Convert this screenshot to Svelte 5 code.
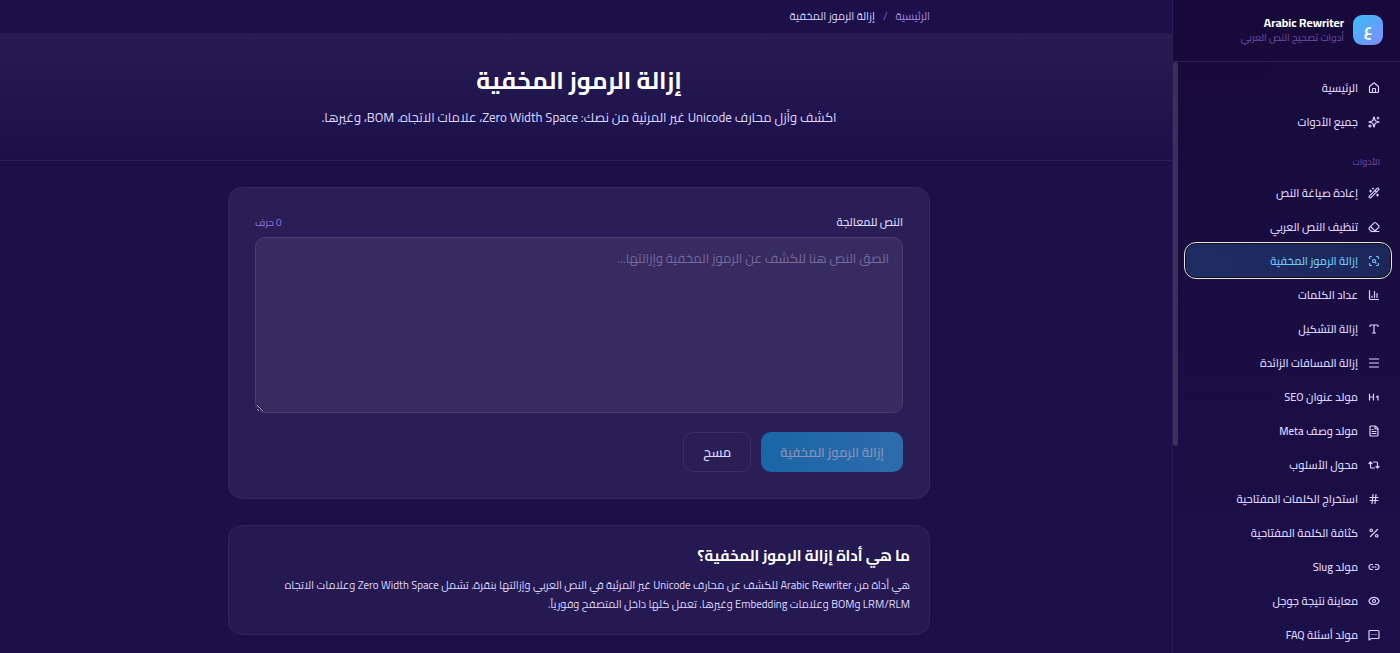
<script>
	let text = $state('');

	const mainLinks = [
		{ icon: 'home', label: 'الرئيسية' },
		{ icon: 'sparkles', label: 'جميع الأدوات' }
	];

	const tools = [
		{ icon: 'wand', label: 'إعادة صياغة النص' },
		{ icon: 'eraser', label: 'تنظيف النص العربي' },
		{ icon: 'scan', label: 'إزالة الرموز المخفية', active: true },
		{ icon: 'chart', label: 'عداد الكلمات' },
		{ icon: 'type', label: 'إزالة التشكيل' },
		{ icon: 'lines', label: 'إزالة المسافات الزائدة' },
		{ icon: 'heading', label: 'مولد عنوان SEO' },
		{ icon: 'file', label: 'مولد وصف Meta' },
		{ icon: 'repeat', label: 'محول الأسلوب' },
		{ icon: 'hash', label: 'استخراج الكلمات المفتاحية' },
		{ icon: 'percent', label: 'كثافة الكلمة المفتاحية' },
		{ icon: 'link', label: 'مولد Slug' },
		{ icon: 'eye', label: 'معاينة نتيجة جوجل' },
		{ icon: 'message', label: 'مولد أسئلة FAQ' }
	];

	const icons = {
		home: 'M15 21v-7a1 1 0 0 0-1-1h-4a1 1 0 0 0-1 1v7M3 10a2 2 0 0 1 .7-1.5l7-6a2 2 0 0 1 2.6 0l7 6A2 2 0 0 1 21 10v9a2 2 0 0 1-2 2H5a2 2 0 0 1-2-2z',
		sparkles: 'M9.94 15.5A2 2 0 0 0 8.5 14.06l-6.14-1.58a.5.5 0 0 1 0-.96L8.5 9.94A2 2 0 0 0 9.94 8.5l1.58-6.14a.5.5 0 0 1 .96 0L14.06 8.5A2 2 0 0 0 15.5 9.94l6.14 1.58a.5.5 0 0 1 0 .96L15.5 14.06a2 2 0 0 0-1.44 1.44l-1.58 6.14a.5.5 0 0 1-.96 0zM20 2v4M22 4h-4M4 18a2 2 0 1 0 0 4 2 2 0 0 0 0-4z',
		wand: 'm21.64 3.64-1.28-1.28a1.2 1.2 0 0 0-1.72 0L2.36 18.64a1.2 1.2 0 0 0 0 1.72l1.28 1.28a1.2 1.2 0 0 0 1.72 0L21.64 5.36a1.2 1.2 0 0 0 0-1.72M14 7l3 3M5 6v4M19 14v4M10 2v2M7 8H3M21 16h-4M11 3H9',
		eraser: 'm7 21-4.3-4.3c-1-1-1-2.5 0-3.4l9.6-9.6c1-1 2.5-1 3.4 0l5.6 5.6c1 1 1 2.5 0 3.4L13 21M22 21H7M5 11l9 9',
		scan: 'M3 7V5a2 2 0 0 1 2-2h2M17 3h2a2 2 0 0 1 2 2v2M21 17v2a2 2 0 0 1-2 2h-2M7 21H5a2 2 0 0 1-2-2v-2M12 9a3 3 0 1 0 0 6 3 3 0 0 0 0-6M16 16l-1.9-1.9',
		chart: 'M3 3v16a2 2 0 0 0 2 2h16M8 17v-3M13 17V5M18 17V9',
		type: 'M12 4v16M4 7V5a1 1 0 0 1 1-1h14a1 1 0 0 1 1 1v2M9 20h6',
		lines: 'M3 4h18M3 12h18M3 20h18',
		heading: 'M3 12h8M3 18V6M11 18V6M17 12l3-2v8',
		file: 'M6 22a2 2 0 0 1-2-2V4a2 2 0 0 1 2-2h8a2.4 2.4 0 0 1 1.7.7l3.6 3.6A2.4 2.4 0 0 1 20 8v12a2 2 0 0 1-2 2zM14 2v5a1 1 0 0 0 1 1h5M10 9H8M16 13H8M16 17H8',
		repeat: 'm2 9 3-3 3 3M13 18H7a2 2 0 0 1-2-2V6M22 15l-3 3-3-3M11 6h6a2 2 0 0 1 2 2v10',
		hash: 'M4 9h16M4 15h16M10 3 8 21M16 3l-2 18',
		percent: 'M19 5 5 19M6.5 4a2.5 2.5 0 1 0 0 5 2.5 2.5 0 0 0 0-5M17.5 15a2.5 2.5 0 1 0 0 5 2.5 2.5 0 0 0 0-5',
		link: 'M9 17H7A5 5 0 0 1 7 7h2M15 7h2a5 5 0 1 1 0 10h-2M8 12h8',
		eye: 'M2 12.3a1 1 0 0 1 0-.7 10.8 10.8 0 0 1 20 0 1 1 0 0 1 0 .7 10.8 10.8 0 0 1-20 0M12 9a3 3 0 1 0 0 6 3 3 0 0 0 0-6',
		message: 'M22 17a2 2 0 0 1-2 2H6.8a2 2 0 0 0-1.4.6l-2.2 2.2A.7.7 0 0 1 2 21.3V5a2 2 0 0 1 2-2h16a2 2 0 0 1 2 2zM12 11h.01M16 11h.01M8 11h.01'
	};
</script>

<svelte:head>
	<title>إزالة الرموز المخفية</title>
</svelte:head>

{#snippet navLink(item)}
	<li>
		<a class="nav-link" class:active={item.active} href="#{item.icon}">
			<svg viewBox="0 0 24 24" aria-hidden="true"><path d={icons[item.icon]} /></svg>
			{item.label}
		</a>
	</li>
{/snippet}

<div class="layout" dir="rtl" lang="ar">
	<aside>
		<a class="brand" href="#home">
			<span class="logo">ع</span>
			<span class="brand-text">
				<strong>Arabic Rewriter</strong>
				<small>أدوات تصحيح النص العربي</small>
			</span>
		</a>
		<div class="scroller">
			<nav>
				<ul>
					{#each mainLinks as item}
						{@render navLink(item)}
					{/each}
				</ul>
				<h2>الأدوات</h2>
				<ul>
					{#each tools as item}
						{@render navLink(item)}
					{/each}
				</ul>
			</nav>
			<div class="track"><div class="thumb"></div></div>
		</div>
	</aside>

	<main>
		<div class="breadcrumb">
			<div class="container">
				<a href="#home">الرئيسية</a>
				<span class="slash">/</span>
				<span>إزالة الرموز المخفية</span>
			</div>
		</div>

		<header class="hero">
			<h1>إزالة الرموز المخفية</h1>
			<p>اكشف وأزل محارف Unicode غير المرئية من نصك: Zero Width Space، علامات الاتجاه، BOM، وغيرها.</p>
		</header>

		<div class="page">
			<div class="container sections">
				<section class="card">
					<div class="field-head">
						<label for="source">النص للمعالجة</label>
						<span>{text.length} حرف</span>
					</div>
					<textarea id="source" bind:value={text} placeholder="الصق النص هنا للكشف عن الرموز المخفية وإزالتها..."></textarea>
					<div class="actions">
						<button class="primary" disabled={!text}>إزالة الرموز المخفية</button>
						<button onclick={() => (text = '')}>مسح</button>
					</div>
				</section>

				<section class="info">
					<h2>ما هي أداة إزالة الرموز المخفية؟</h2>
					<p>هي أداة من Arabic Rewriter للكشف عن محارف Unicode غير المرئية في النص العربي وإزالتها بنقرة. تشمل Zero Width Space وعلامات الاتجاه LRM/RLM وBOM وعلامات Embedding وغيرها. تعمل كلها داخل المتصفح وفورياً.</p>
				</section>
			</div>
		</div>
	</main>
</div>

<style>
	:global(body) {
		margin: 0;
		background: #1b104a;
	}

	.layout {
		display: flex;
		height: 100vh;
		overflow: hidden;
		color: #ddd6fe;
		font-family: Cairo, 'Noto Kufi Arabic', 'Noto Sans', sans-serif;
		font-size: 11px;
	}

	h1, h2, p, ul {
		margin: 0;
		padding: 0;
	}

	a {
		color: inherit;
		text-decoration: none;
	}

	aside {
		box-sizing: border-box;
		width: 228px;
		flex: none;
		display: flex;
		flex-direction: column;
		background: linear-gradient(#170a3a, #1b1049);
		border-left: 1px solid #2a1d52;
	}

	.brand {
		display: flex;
		align-items: center;
		gap: 9px;
		height: 62px;
		flex: none;
		box-sizing: border-box;
		padding: 0 17px 1px;
		border-bottom: 1px solid #2a1d52;
	}

	.logo {
		width: 30px;
		height: 30px;
		line-height: 30px;
		border-radius: 9px;
		background: linear-gradient(135deg, #38bdf8, #818cf8);
		color: #fff;
		font-size: 15px;
		font-weight: 700;
		text-align: center;
	}

	.brand-text {
		display: flex;
		flex-direction: column;
	}

	.brand-text strong {
		color: #fff;
		font-size: 12px;
		line-height: 15px;
	}

	.brand-text small {
		color: #6a4fa6;
		font-size: 10px;
		line-height: 15px;
	}

	.scroller {
		flex: 1;
		min-height: 0;
		display: flex;
	}

	nav {
		flex: 1;
		padding: 9px 10px 0 8px;
		overflow: hidden;
	}

	.track {
		width: 5px;
	}

	.thumb {
		height: 65%;
		border-radius: 3px;
		background: #3b2f5c;
	}

	nav h2 {
		padding: 15px 10px 6px;
		color: #624a9b;
		font-size: 9px;
		font-weight: 600;
		line-height: 16px;
	}

	ul {
		list-style: none;
	}

	.nav-link {
		display: flex;
		align-items: center;
		gap: 10px;
		height: 33px;
		margin-bottom: 1px;
		padding: 0 10px;
		border-radius: 10px;
		color: #ddd2fb;
		font-weight: 600;
	}

	.nav-link.active {
		background: linear-gradient(90deg, #1f2c64, #1d2659);
		color: #6cc8f6;
		outline: 1px solid #e5e5e5;
		outline-offset: 1px;
		box-shadow: 0 0 0 1px #101010;
	}

	svg {
		width: 12px;
		height: 12px;
		fill: none;
		stroke: currentColor;
		stroke-width: 2.4;
		stroke-linecap: round;
		stroke-linejoin: round;
	}

	main {
		flex: 1;
		min-width: 0;
	}

	.container {
		max-width: 702px;
		margin: 0 auto;
	}

	/* keeps the content clear of the sidebar edge */
	.breadcrumb,
	.page {
		padding: 0 14px 0 0;
	}

	.breadcrumb .container {
		display: flex;
		gap: 8px;
		height: 33px;
		font-size: 11px;
		line-height: 32px;
	}

	.breadcrumb a {
		color: #a78bda;
	}

	.slash {
		color: #7c55e6;
	}

	.hero {
		box-sizing: border-box;
		height: 128px;
		padding: 27px 30px 0 16px;
		border-bottom: 1px solid #2a1e56;
		background: linear-gradient(#261b52, #1b104a);
		text-align: center;
	}

	.hero h1 {
		color: #fff;
		font-size: 24px;
		font-weight: 700;
		line-height: 42px;
	}

	.hero p {
		font-size: 13px;
		line-height: 30px;
	}

	.sections {
		display: flex;
		flex-direction: column;
		gap: 26px;
		padding-top: 26px;
	}

	.card,
	.info {
		border: 1px solid #33275f;
		border-radius: 14px;
		background: #291e55;
	}

	.card {
		padding: 25px 26px 26px;
	}

	.field-head {
		display: flex;
		justify-content: space-between;
		align-items: center;
		height: 18px;
		margin-bottom: 6px;
	}

	.field-head label {
		font-weight: 600;
	}

	.field-head span {
		color: #9676e2;
		font-size: 10px;
	}

	textarea {
		display: block;
		box-sizing: border-box;
		width: 100%;
		height: 176px;
		padding: 8px 13px;
		border: 1px solid #4a3d70;
		border-radius: 10px;
		background: #372c60;
		color: #fff;
		font: inherit;
		font-size: 13px;
		line-height: 24px;
		resize: vertical;
	}

	textarea::placeholder {
		color: #75689b;
	}

	.actions {
		display: flex;
		gap: 10px;
		margin-top: 19px;
	}

	button {
		height: 40px;
		padding: 0 19px;
		border: 1px solid #3b2f66;
		border-radius: 10px;
		background: transparent;
		color: #ddd6fe;
		font: inherit;
		font-size: 13px;
		font-weight: 600;
	}

	.primary {
		border: 0;
		background: linear-gradient(90deg, #1966a6, #2d6cab);
		color: #8d8fb8;
	}

	.info {
		padding: 18px 19px 20px;
		background: #241951;
		border-color: #30245b;
	}

	.info h2 {
		color: #fff;
		font-size: 15px;
		font-weight: 700;
		line-height: 24px;
		margin-bottom: 8px;
	}

	.info p {
		line-height: 19px;
	}
</style>
